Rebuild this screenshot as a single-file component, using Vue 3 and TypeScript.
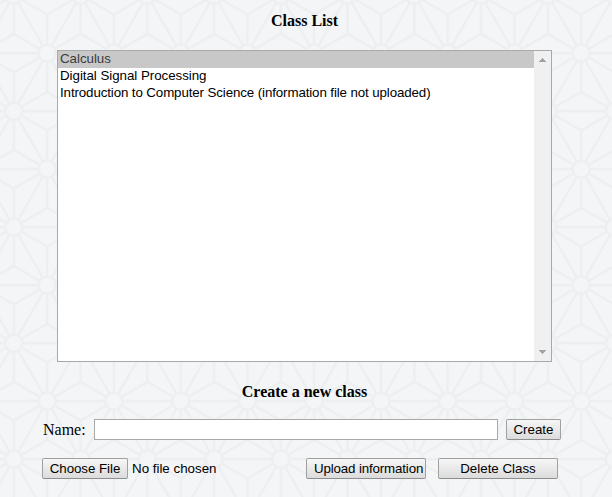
<script setup lang="ts">
import { ref } from 'vue'

interface ClassItem {
  id: number
  title: string
}

const classes: ClassItem[] = [
  { id: 1, title: 'Calculus' },
  { id: 2, title: 'Digital Signal Processing' },
  { id: 3, title: 'Introduction to Computer Science (information file not uploaded)' },
]
const selected = ref<number>(1)
const newName = ref<string>('')
</script>

<template>
  <main class="page">
    <svg class="backdrop" width="612" height="497" aria-hidden="true">
      <defs>
        <pattern id="stars" x="47.2" y="53.2" width="66.75" height="116" patternUnits="userSpaceOnUse">
          <g fill="none" stroke="#eceef0" stroke-width="2.3">
            <path d="M0 0H66.75M0 58H66.75M0 116H66.75" />
            <path d="M0 0L66.75 116M66.75 0L0 116" />
            <path d="M0 0V38.67M66.75 0V38.67M0 116V77.33M66.75 116V77.33M33.375 19.33V96.67" />
            <path d="M0 0L33.375 19.33L66.75 0M0 116L33.375 96.67L66.75 116" />
            <path d="M0 38.67L33.375 58L66.75 38.67M0 77.33L33.375 58L66.75 77.33" />
          </g>
          <g fill="#f3f5f7" stroke="#eceef0" stroke-width="2.3">
            <circle cx="0" cy="0" r="8.6" />
            <circle cx="66.75" cy="0" r="8.6" />
            <circle cx="0" cy="116" r="8.6" />
            <circle cx="66.75" cy="116" r="8.6" />
            <circle cx="33.375" cy="58" r="8.6" />
          </g>
        </pattern>
      </defs>
      <rect width="612" height="497" fill="url(#stars)" />
    </svg>

    <div class="content">
      <h3 class="title">Class List</h3>
      <div class="listbox">
        <ul class="options" role="listbox">
          <li
            v-for="item in classes"
            :key="item.id"
            role="option"
            class="option"
            :class="{ active: item.id === selected }"
            @click="selected = item.id"
          >{{ item.title }}</li>
        </ul>
        <div class="scrollbar">
          <svg width="7" height="4" viewBox="0 0 7 4" shape-rendering="crispEdges"><path d="M3 0h1v1h1v1h1v1h1v1H0V3h1V2h1V1h1z" fill="#a3a3a3" /></svg>
          <svg width="7" height="4" viewBox="0 0 7 4" shape-rendering="crispEdges"><path d="M0 0h7v1H6v1H5v1H4v1H3V3H2V2H1V1H0z" fill="#a3a3a3" /></svg>
        </div>
      </div>

      <h3 class="title second">Create a new class</h3>
      <div class="name-row">
        <label for="class-name">Name:</label>
        <input id="class-name" v-model="newName" type="text" class="field" />
        <button type="button" class="btn create">Create</button>
      </div>
      <div class="file-row">
        <button type="button" class="btn choose">Choose File</button>
        <span class="file-name">No file chosen</span>
        <button type="button" class="btn wide upload">Upload information</button>
        <button type="button" class="btn wide">Delete Class</button>
      </div>
    </div>
  </main>
</template>

<style>
body {
  background: #f3f5f7;
}
</style>

<style scoped>
.page {
  position: relative;
  width: 612px;
  height: 497px;
  overflow: hidden;
  background: #f3f5f7;
  color: #000;
  font-family: 'Liberation Serif', 'Times New Roman', serif;
  font-size: 16px;
}
.backdrop {
  position: absolute;
  inset: 0;
}
.content {
  position: relative;
  width: 609px;
  padding-top: 12px;
}
.title {
  margin: 0;
  font-size: 16px;
  line-height: 18px;
  text-align: center;
}
.second {
  margin-top: 21px;
}
.listbox {
  display: flex;
  box-sizing: border-box;
  width: 495px;
  height: 312px;
  margin: 20px 0 0 57px;
  border: 1px solid #a9a9a9;
  background: #fff;
  font: 13.333px/15px 'Liberation Sans', Arial, sans-serif;
}
.options {
  flex: 1;
  margin: 0;
  padding: 0;
  list-style: none;
}
.option {
  box-sizing: border-box;
  height: 17px;
  padding: 0 0 2px 2px;
  letter-spacing: -0.04px;
  white-space: nowrap;
}
.option:nth-child(3) {
  letter-spacing: -0.115px;
}
.active {
  background: #c8c8c8;
  color: #3c3c3c;
}
.scrollbar {
  display: flex;
  flex-direction: column;
  align-items: center;
  justify-content: space-between;
  box-sizing: border-box;
  width: 17px;
  padding: 7px 0;
  background: #f0f0f0;
}
.name-row {
  display: flex;
  align-items: center;
  height: 21px;
  margin: 18px 0 0 43px;
}
.name-row label {
  width: 51px;
}
.field {
  box-sizing: border-box;
  width: 404px;
  height: 21px;
  margin: 0 8px 0 0;
  padding: 1px 2px;
  border: 1px solid #a9a9a9;
  border-radius: 0;
  outline: none;
  background: #fff;
  font: 13.333px 'Liberation Sans', Arial, sans-serif;
}
.file-row {
  display: flex;
  align-items: center;
  height: 21px;
  margin: 18px 0 0 42px;
}
.btn {
  flex: none;
  box-sizing: border-box;
  height: 21px;
  margin: 0;
  padding: 1px 0 0;
  border: 1px solid #a0a0a0;
  border-bottom-color: #8e8e8e;
  border-radius: 2px;
  background: linear-gradient(#f6f6f6, #dcdcdc);
  color: #000;
  font: 13.333px/18px 'Liberation Sans', Arial, sans-serif;
  white-space: nowrap;
}
.create {
  width: 55px;
}
.choose {
  width: 86px;
  letter-spacing: -0.05px;
}
.file-name {
  width: 174px;
  margin-left: 4px;
  font: 13.333px/20px 'Liberation Sans', Arial, sans-serif;
}
.wide {
  width: 120px;
}
.upload {
  padding-left: 7px;
  letter-spacing: -0.15px;
  text-align: left;
}
.wide + .wide {
  margin-left: 12px;
}
</style>
